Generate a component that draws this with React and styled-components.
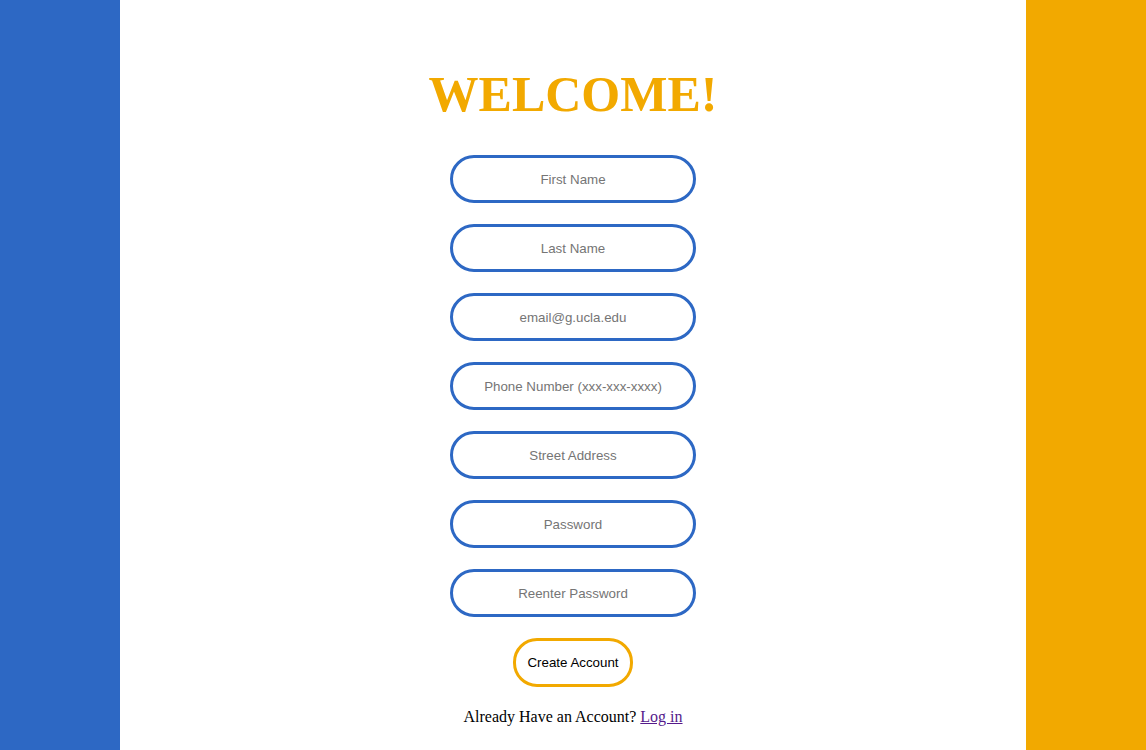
import React from "react";
import styled, { createGlobalStyle } from "styled-components";

const uclaBlue = "#2d68c4";
const uclaGold = "#f2a900";

const GlobalStyle = createGlobalStyle`
    body {
        margin: 0;
        font-family: "Liberation Serif", "Times New Roman", serif;
    }
`;

const Page = styled.div`
    display: grid;
    grid-template-columns: 120px 1fr 120px;
    min-height: 750px;
`;

const SideBar = styled.div`
    background: ${(props) => props.colour};
`;

const Main = styled.main`
    display: flex;
    flex-direction: column;
    align-items: center;
    padding-top: 65px;
`;

const Title = styled.h1`
    margin: 0 0 32px;
    font-size: 50px;
    line-height: 58px;
    font-weight: bold;
    color: ${uclaGold};
`;

const Form = styled.form`
    display: flex;
    flex-direction: column;
    align-items: center;
    gap: 21px;
`;

const Field = styled.input`
    box-sizing: border-box;
    width: 246px;
    height: 48px;
    border: 3px solid ${uclaBlue};
    border-radius: 24px;
    text-align: center;
    font-family: "Liberation Sans", Arial, sans-serif;
    font-size: 13.33px;
    outline: none;

    &::placeholder {
        color: #757575;
    }
`;

const SubmitBtn = styled.button`
    box-sizing: border-box;
    width: 120px;
    height: 49px;
    background: #fff;
    border: 3px solid ${uclaGold};
    border-radius: 24px;
    font-family: "Liberation Sans", Arial, sans-serif;
    font-size: 13.33px;
    color: #000;
    cursor: pointer;
`;

const Footer = styled.p`
    margin: 21px 0 0;
    font-size: 16px;

    a {
        color: #551a8b;
    }
`;

const fields = [
    { name: "firstName", placeholder: "First Name" },
    { name: "lastName", placeholder: "Last Name" },
    { name: "email", placeholder: "email@g.ucla.edu" },
    { name: "phone", placeholder: "Phone Number (xxx-xxx-xxxx)" },
    { name: "address", placeholder: "Street Address" },
    { name: "password", placeholder: "Password", type: "password" },
    { name: "password2", placeholder: "Reenter Password", type: "password" },
];

const App = () => {
    return (
        <Page>
            <GlobalStyle />
            <SideBar colour={uclaBlue} />
            <Main>
                <Title>WELCOME!</Title>
                <Form onSubmit={(e) => e.preventDefault()}>
                    {fields.map((f) => (
                        <Field
                            key={f.name}
                            name={f.name}
                            type={f.type || "text"}
                            placeholder={f.placeholder}
                        />
                    ))}
                    <SubmitBtn type="submit">Create Account</SubmitBtn>
                </Form>
                <Footer>
                    Already Have an Account? <a href="#login">Log in</a>
                </Footer>
            </Main>
            <SideBar colour={uclaGold} />
        </Page>
    );
};

export default App;
